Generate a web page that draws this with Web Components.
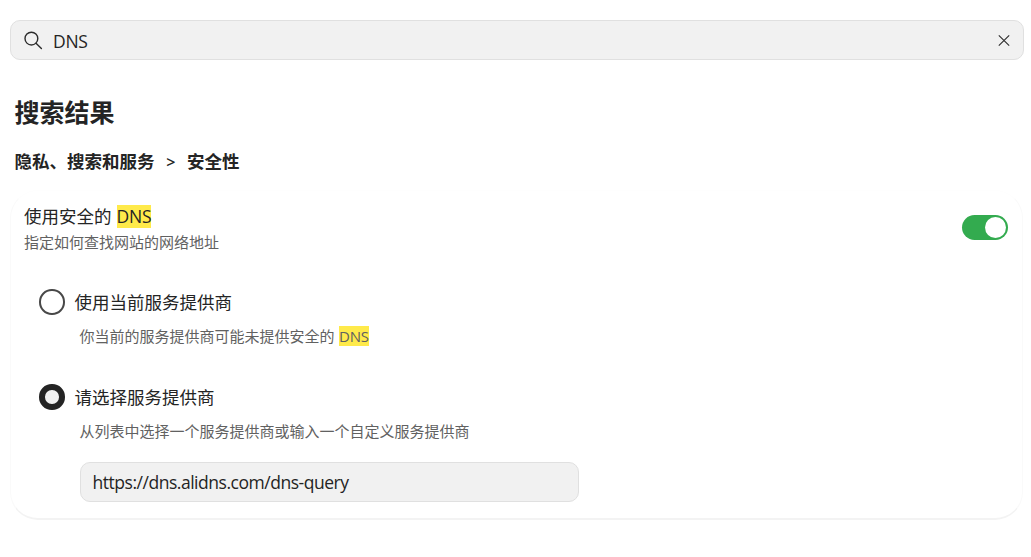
<!DOCTYPE html>
<html lang="zh-CN">
<head>
<meta charset="UTF-8">
<title>设置</title>
<style>
    body {
        margin: 0;
        padding: 20px 7px 0 10px;
        background: #fff;
        color: #242424;
        font-family: "Open Sans", "Noto Sans CJK SC", sans-serif;
        font-size: 17.5px;
    }
</style>
</head>
<body>
<settings-page>
    <search-box value="DNS"></search-box>
    <bread-crumb from="隐私、搜索和服务" to="安全性"></bread-crumb>
    <setting-card>
        <setting-row slot="header">
            使用安全的 <mark-text>DNS</mark-text>
            <span slot="desc">指定如何查找网站的网络地址</span>
            <toggle-switch slot="control"></toggle-switch>
        </setting-row>
        <radio-option>
            使用当前服务提供商
            <span slot="desc">你当前的服务提供商可能未提供安全的 <mark-text small>DNS</mark-text></span>
        </radio-option>
        <radio-option checked>
            请选择服务提供商
            <span slot="desc">从列表中选择一个服务提供商或输入一个自定义服务提供商</span>
            <text-field slot="field" value="https://dns.alidns.com/dns-query"></text-field>
        </radio-option>
    </setting-card>
</settings-page>

<script>
class BaseElement extends HTMLElement {
    connectedCallback() {
        this.attachShadow({ mode: 'open' });
        this.shadowRoot.innerHTML = this.render();
    }
}

class SettingsPage extends BaseElement {
    render() {
        return `
            <style>
                :host { display: block; }
                h1 {
                    margin: 34px 0 0 4.5px;
                    font-size: 25px;
                    line-height: 36px;
                    font-weight: 700;
                }
            </style>
            <slot name="search"></slot>
            <h1>搜索结果</h1>
            <slot></slot>
        `;
    }
    connectedCallback() {
        this.querySelector('search-box').slot = 'search';
        super.connectedCallback();
    }
}

class SearchBox extends BaseElement {
    render() {
        return `
            <style>
                :host {
                    display: flex;
                    align-items: center;
                    box-sizing: border-box;
                    height: 40px;
                    padding: 0 12px 0 13px;
                    background: #f1f1f1;
                    border: 1px solid #e0e0e0;
                    border-radius: 10px;
                }
                span {
                    flex: 1;
                    margin-left: 10px;
                    padding-top: 2px;
                    line-height: 24px;
                    letter-spacing: -0.3px;
                }
                svg {
                    display: block;
                    fill: none;
                    stroke: #2c2c2c;
                }
            </style>
            <svg width="19" height="19" viewBox="0 0 19 19" stroke-width="1.4" stroke-linecap="round">
                <circle cx="7.4" cy="7.6" r="6.4"/>
                <path d="M12 12.2l5.4 5.4"/>
            </svg>
            <span>${this.getAttribute('value')}</span>
            <svg width="14" height="14" viewBox="0 0 14 14" stroke-width="1.1">
                <path d="M1.8 2.3l10.4 10.4M12.2 2.3L1.8 12.7"/>
            </svg>
        `;
    }
}

class BreadCrumb extends BaseElement {
    render() {
        return `
            <style>
                :host {
                    display: flex;
                    margin: 19px 0 0 4.5px;
                    line-height: 24px;
                    font-weight: 700;
                }
                i {
                    width: 32.5px;
                    text-align: center;
                    font-style: normal;
                    font-size: 16px;
                    line-height: 27px;
                    font-weight: 600;
                }
            </style>
            <span>${this.getAttribute('from')}</span><i>&gt;</i><span>${this.getAttribute('to')}</span>
        `;
    }
}

class SettingCard extends BaseElement {
    render() {
        return `
            <style>
                :host {
                    display: block;
                    box-sizing: border-box;
                    height: 330px;
                    width: 1013px;
                    margin-top: 14px;
                    padding: 13px 14px 0 13px;
                    border: 1px solid #fafafa;
                    border-top-color: #fefefe;
                    border-bottom: 2px solid #f3f3f3;
                    border-radius: 28px;
                }
                .options {
                    display: flex;
                    flex-direction: column;
                    gap: 37px;
                    margin: 36px 0 0 15px;
                }
            </style>
            <slot name="header"></slot>
            <div class="options"><slot></slot></div>
        `;
    }
}

class SettingRow extends BaseElement {
    render() {
        return `
            <style>
                :host {
                    display: flex;
                    align-items: center;
                    justify-content: space-between;
                }
                .title { line-height: 24px; }
                .desc {
                    margin-top: 3px;
                    font-size: 15px;
                    line-height: 22px;
                    color: #616161;
                }
            </style>
            <div>
                <div class="title"><slot></slot></div>
                <div class="desc"><slot name="desc"></slot></div>
            </div>
            <slot name="control"></slot>
        `;
    }
}

class ToggleSwitch extends BaseElement {
    render() {
        return `
            <style>
                :host {
                    display: flex;
                    align-items: center;
                    justify-content: flex-end;
                    box-sizing: border-box;
                    width: 46px;
                    height: 25px;
                    margin-bottom: 3px;
                    padding-right: 2px;
                    border-radius: 13px;
                    background: #33ab4f;
                }
                i {
                    width: 21px;
                    height: 21px;
                    border-radius: 50%;
                    background: #fff;
                }
            </style>
            <i></i>
        `;
    }
}

class MarkText extends BaseElement {
    render() {
        return `
            <style>
                :host {
                    display: inline-block;
                    margin-left: 0.5px;
                    line-height: 23px;
                    letter-spacing: -0.25px;
                    background: #ffea4a;
                }
                :host([small]) {
                    line-height: 20px;
                    letter-spacing: -0.15px;
                }
            </style>
            <slot></slot>
        `;
    }
}

class RadioOption extends BaseElement {
    render() {
        return `
            <style>
                :host {
                    display: grid;
                    grid-template-columns: 26px 1fr;
                    column-gap: 9.5px;
                }
                .dot {
                    box-sizing: border-box;
                    width: 25.5px;
                    height: 25.5px;
                    border: 2px solid #484848;
                    border-radius: 50%;
                }
                :host([checked]) .dot {
                    border: 6px solid #242424;
                    background: #f1f1f1;
                }
                .label { line-height: 27px; }
                .body {
                    grid-column: 2;
                    margin: 9px 0 0 5px;
                }
                .desc {
                    font-size: 15px;
                    line-height: 22px;
                    color: #616161;
                }
            </style>
            <div class="dot"></div>
            <div class="label"><slot></slot></div>
            <div class="body">
                <div class="desc"><slot name="desc"></slot></div>
                <slot name="field"></slot>
            </div>
        `;
    }
}

class TextField extends BaseElement {
    render() {
        return `
            <style>
                :host {
                    display: block;
                    box-sizing: border-box;
                    width: 499px;
                    height: 40px;
                    margin-top: 20px;
                    padding: 0 12px;
                    background: #f1f1f1;
                    border: 1px solid #e0e0e0;
                    border-radius: 10px;
                    line-height: 38px;
                    letter-spacing: -0.47px;
                }
            </style>
            <span>${this.getAttribute('value')}</span>
        `;
    }
}

customElements.define('settings-page', SettingsPage);
customElements.define('search-box', SearchBox);
customElements.define('bread-crumb', BreadCrumb);
customElements.define('setting-card', SettingCard);
customElements.define('setting-row', SettingRow);
customElements.define('toggle-switch', ToggleSwitch);
customElements.define('mark-text', MarkText);
customElements.define('radio-option', RadioOption);
customElements.define('text-field', TextField);
</script>
</body>
</html>
